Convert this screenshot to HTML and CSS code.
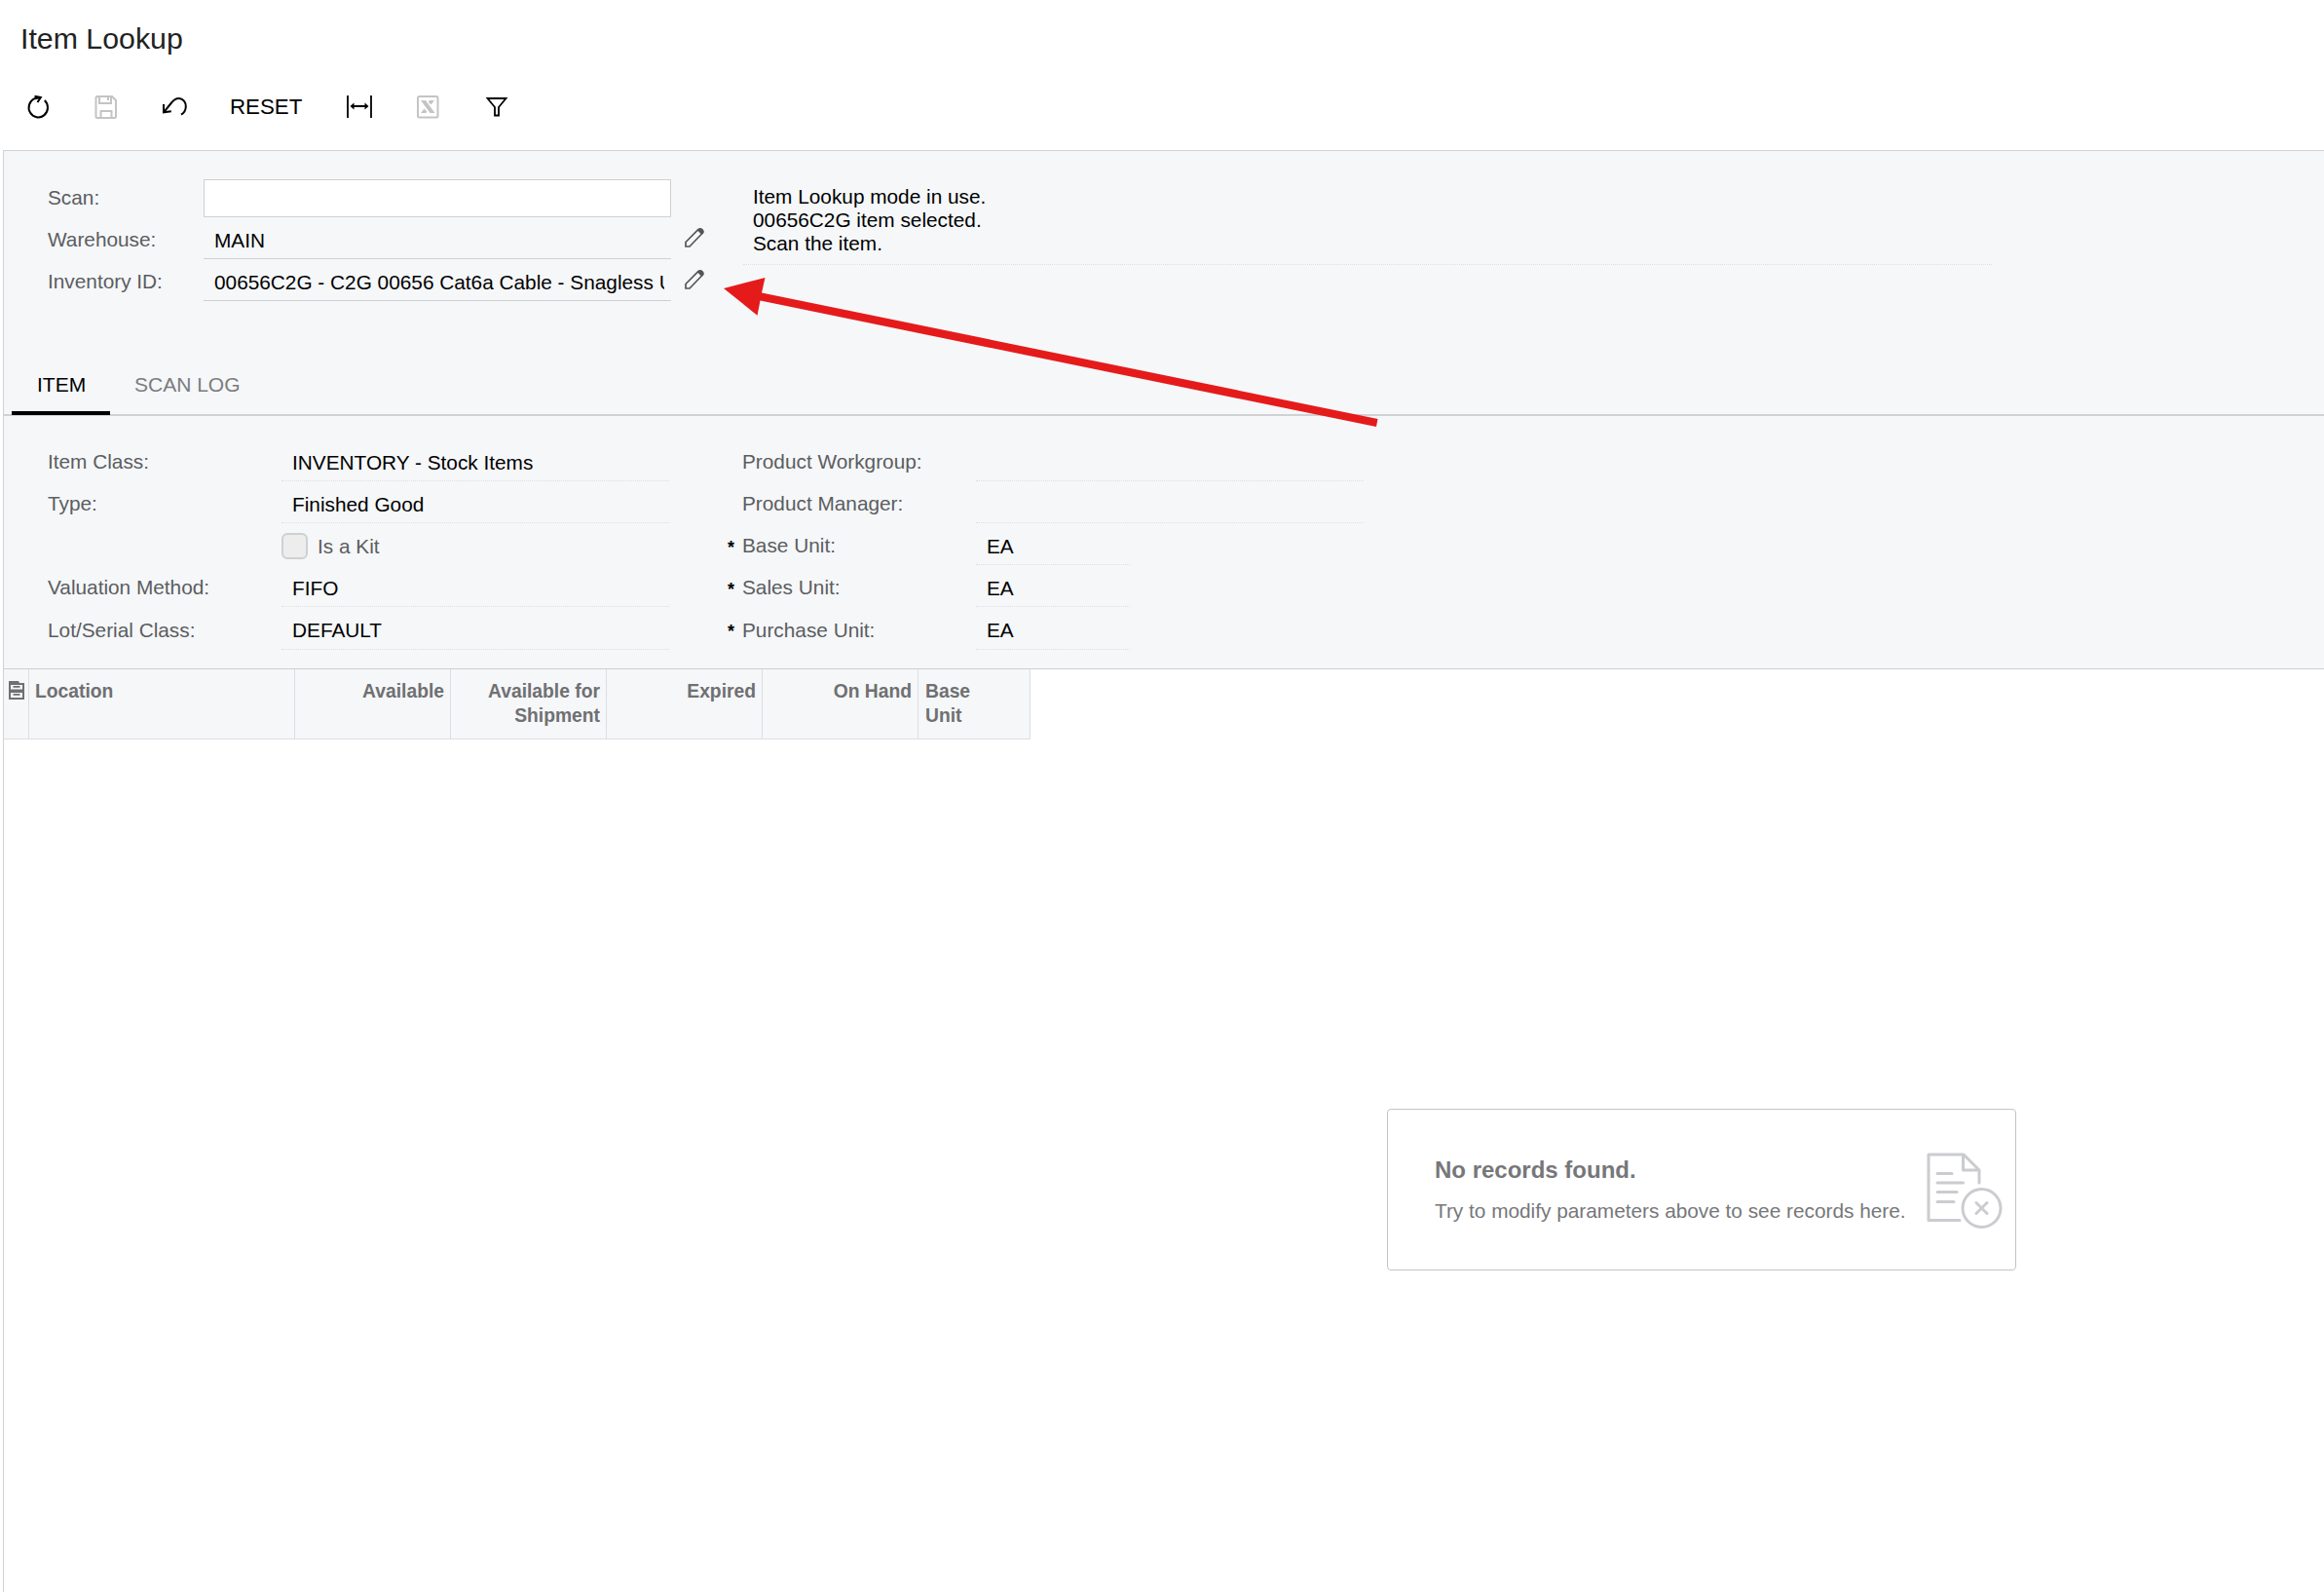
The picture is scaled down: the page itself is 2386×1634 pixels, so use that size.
FILE: index.html
```html
<!DOCTYPE html>
<html lang="en">
<head>
<meta charset="utf-8">
<title>Item Lookup</title>
<link rel="stylesheet" href="styles.css">
</head>
<body>
<header class="header">
  <h1 class="title">Item Lookup</h1>
  <div class="toolbar">
    <svg class="tool refresh" viewBox="0 0 24 26" fill="none" stroke="#000" stroke-width="2"><path d="M18.800 6A9.700 10 0 1 1 8.500 4.200L13 3.500"/><path d="M8.500 1.800 14.800 3 11.500 8"/></svg>
    <svg class="tool save" viewBox="0 0 24 26" fill="none" stroke="#c4c4c4" stroke-width="2"><path d="M3 2H18L22 6V22.500Q22 24 20.500 24H3Q1.500 24 1.500 22.500V3.500Q1.500 2 3 2Z"/><path d="M5 2V9H17V2M14 3V6M6.500 24V17H17.500V24"/></svg>
    <svg class="tool undo" viewBox="0 0 26 26" fill="none" stroke="#000" stroke-width="2"><path d="M2 10V18.300L9.800 17.300M2 18.300 10 8.500C13 4.800 15.500 3.700 18 4 22.500 4.500 25 8.500 24.800 12.500 24.700 16 22.800 19 20 20.700"/></svg>
    <span class="reset">RESET</span>
    <svg class="tool fit" viewBox="0 0 28 26" fill="none" stroke="#000" stroke-width="1.800"><path d="M2 1V24M26 1V24M7 12H21"/><path d="M8.500 8.500 4.500 12 8.500 15.500ZM19.500 8.500 23.500 12 19.500 15.500Z" fill="#000" stroke="none"/></svg>
    <svg class="tool excel" viewBox="0 0 24 26" fill="none" stroke="#c4c4c4" stroke-width="2"><rect x="2" y="2" width="20.500" height="21.500" rx="1.500"/><path d="M5 6H10L19.500 19H14.500Z" fill="#c4c4c4" stroke="none"/><path d="M14 6H19L15.500 10.500 12.800 7.800ZM5 19H10.500L11.200 17.500 8.500 14.500Z" fill="#c4c4c4" stroke="none"/></svg>
    <svg class="tool filter" viewBox="0 0 24 24" fill="none" stroke="#000" stroke-width="1.800"><path d="M2.500 3H21.500L14 12V20.500H10V12Z"/></svg>
  </div>
</header>
<main class="content">
  <section class="scan">
    <div class="form scan-form">
      <label class="label">Scan:</label><input class="scan-input" type="text"><span></span>
      <label class="label">Warehouse:</label><div class="value solid">MAIN</div>
      <svg class="pencil" viewBox="0 0 22 22"><path d="M2 20V15.500L15 2.500Q17 1 19 3 20.500 5 19 6.500L6 20Z" fill="none" stroke="#555" stroke-width="1.700"/><path d="M14 3.500Q17 0 19.500 2.500 22 5 18.500 8Z" fill="#555"/></svg>
      <label class="label">Inventory ID:</label><div class="value solid"><div class="clip">00656C2G - C2G 00656 Cat6a Cable - Snagless U</div></div>
      <svg class="pencil" viewBox="0 0 22 22"><path d="M2 20V15.500L15 2.500Q17 1 19 3 20.500 5 19 6.500L6 20Z" fill="none" stroke="#555" stroke-width="1.700"/><path d="M14 3.500Q17 0 19.500 2.500 22 5 18.500 8Z" fill="#555"/></svg>
    </div>
    <div class="message">Item Lookup mode in use.<br>00656C2G item selected.<br>Scan the item.</div>
    <svg class="arrow" viewBox="0 0 680 170"><path d="M0 11 42.500 0 39 15.500 671.500 145 670 153 37.500 23.500 34.500 38.700Z" fill="#e51b1b"/></svg>
  </section>
  <nav class="tabs"><span class="tab active">ITEM</span><span class="tab">SCAN LOG</span></nav>
  <section class="details">
    <div class="form left">
      <label class="label">Item Class:</label><div class="value">INVENTORY - Stock Items</div>
      <label class="label">Type:</label><div class="value">Finished Good</div>
      <span></span><div class="check"><i class="box"></i>Is a Kit</div>
      <label class="label">Valuation Method:</label><div class="value">FIFO</div>
      <label class="label last">Lot/Serial Class:</label><div class="value last-value">DEFAULT</div>
    </div>
    <div class="form right">
      <span></span><label class="label">Product Workgroup:</label><div class="value"></div>
      <span></span><label class="label">Product Manager:</label><div class="value"></div>
      <span class="star">*</span><label class="label">Base Unit:</label><div class="value short">EA</div>
      <span class="star">*</span><label class="label">Sales Unit:</label><div class="value short">EA</div>
      <span class="star">*</span><label class="label last">Purchase Unit:</label><div class="value short last-value">EA</div>
    </div>
  </section>
  <section class="grid">
    <div class="columns">
      <div class="col files"><svg class="cabinet" viewBox="0 0 18 20"><path d="M1 0H11L12 2H17V19H1Z" fill="#6f7071"/><path d="M3 4H15V8.500H3ZM3 12H15V17H3Z" fill="#f5f7f9"/><path d="M5.500 5H12.500V6.700H5.500ZM5.500 13H12.500V14.700H5.500Z" fill="#6f7071"/></svg></div>
      <div class="col">Location</div>
      <div class="col num">Available</div>
      <div class="col num">Available for Shipment</div>
      <div class="col num">Expired</div>
      <div class="col num">On Hand</div>
      <div class="col unit">Base<br>Unit</div>
    </div>
    <div class="empty">
      <div class="empty-text"><strong class="empty-title">No records found.</strong><span>Try to modify parameters above to see records here.</span></div>
      <svg class="empty-icon" viewBox="0 0 80 80" fill="none" stroke="#cbccd0" stroke-width="3" stroke-linecap="round" stroke-linejoin="round"><path d="M35 69.500H3V2H39L55 18V31M38.500 2V18H55M12 21.500H27M12 31H38.500M12 40.500H32M12 50.500H29"/><circle cx="57.500" cy="57" r="19.500"/><path d="M52 51.500 63 62.500M63 51.500 52 62.500"/></svg>
    </div>
  </section>
</main>
</body>
</html>
```
FILE: styles.css
```css
* { box-sizing: border-box; }
body { margin: 0; height: 1634px; display: flex; flex-direction: column; overflow: hidden; background: #fff; color: #000; font: 20.8px/24px "Liberation Sans", Arial, sans-serif; }
.header { height: 154px; flex: none; padding: 22px 0 0 21px; }
.title { margin: 0; font-size: 30.3px; line-height: 36px; font-weight: 400; color: #222; }
.toolbar { display: flex; align-items: center; height: 40px; margin-top: 32px; }
.tool { flex: none; width: 24px; height: 26px; }
.refresh { margin-left: 6px; }
.save { margin-left: 46px; }
.undo { margin-left: 45px; width: 26px; }
.reset { margin-left: 44px; width: 76px; font-size: 22.3px; }
.fit { margin-left: 43px; width: 28px; }
.excel { margin-left: 44px; }
.filter { margin-left: 47px; height: 24px; }
.content { flex: 1; margin-left: 3px; border: solid #d0d3d5; border-width: 1px 0 0 1px; background: #f5f7f9; display: flex; flex-direction: column; }
.scan { position: relative; display: flex; height: 213px; padding: 29px 0 0 45px; }
.form { display: grid; align-content: start; grid-auto-rows: 43px; }
.scan-form { grid-template-columns: 160px 480px 50px; }
.label { color: #5c5d5f; padding-top: 7px; }
.scan-input { height: 39px; width: 480px; border: 1px solid #cfd0d2; background: #fff; }
.value { height: 39px; padding: 8px 7px 0 11px; border-bottom: 1px dotted #dcdee0; white-space: nowrap; }
.value.solid { border-bottom: 1px solid #cfd0d2; }
.clip { overflow: hidden; }
.pencil { width: 22px; height: 22px; margin: 6px 0 0 13px; }
.message { margin: 0 0 0 24px; padding: 6px 0 0 10px; width: 1282px; height: 88px; border-bottom: 1px dotted #dcdee0; }
.arrow { position: absolute; left: 739px; top: 130px; width: 680px; height: 170px; z-index: 1; }
.tabs { display: flex; height: 59px; padding-left: 8px; border-bottom: 2px solid #cfd1d3; }
.tab { height: 58px; padding: 15px 25px 0; color: #7b7c7e; font-size: 21px; }
.tab.active { width: 101px; padding-left: 26px; color: #000; border-bottom: 4px solid #000; }
.details { display: flex; height: 259px; padding-left: 45px; padding-top: 28px; }
.left { grid-template-columns: 240px 398px; }
.right { grid-template-columns: 17px 240px 398px; margin-left: 58px; }
.short { width: 158px; }
.last { padding-top: 8px; }
.last-value { height: 40px; }
.star { padding: 9px 0 0 2px; font-size: 18px; font-weight: 700; }
.check { display: flex; align-items: center; gap: 10px; height: 39px; color: #5c5d5f; }
.box { width: 27px; height: 27px; border: 2px solid #cfd0d0; border-radius: 6px; background: #ededed; }
.grid { flex: 1; border-top: 1px solid #cdd0d2; background: #fff; }
.columns { display: grid; grid-template-columns: 26px 273px 160px 160px 160px 160px 115px; width: 1054px; height: 72px; border-bottom: 1px solid #dcdfe1; background: #f5f7f9; color: #6f7071; font-size: 19.3px; line-height: 25px; font-weight: 700; }
.col { padding: 10px 6px 0; border-right: 1px solid #dcdfe1; }
.unit { padding-left: 7px; }
.files { padding: 12px 0 0 4px; }
.num { text-align: right; }
.cabinet { display: block; width: 18px; height: 20px; }
.empty { display: flex; width: 646px; height: 166px; margin: 379px 0 0 1420px; padding: 44px 0 0 48px; border: 1px solid #c3c4c6; border-radius: 4px; color: #76777a; }
.empty-text { width: 504px; padding-top: 6px; display: flex; flex-direction: column; gap: 18px; white-space: nowrap; }
.empty-title { font-size: 24px; }
.empty-icon { width: 80px; height: 80px; }
```
